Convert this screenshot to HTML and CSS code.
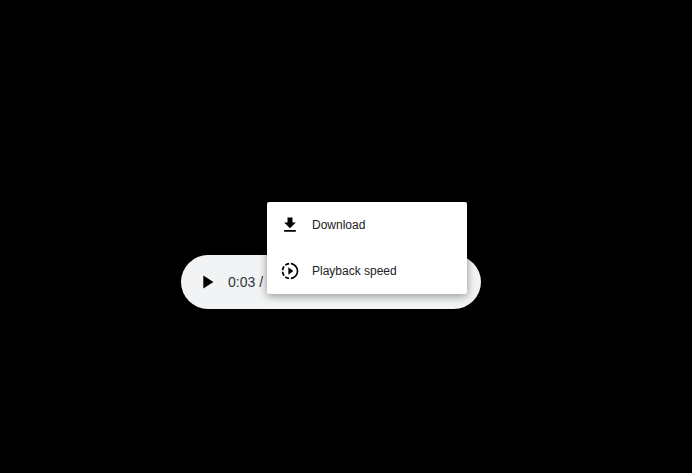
FILE: index.html
```html
<!DOCTYPE html>
<html lang="en">

<head>
    <meta charset="UTF-8">
    <meta name="viewport" content="width=device-width, initial-scale=1.0">
    <title>Audio player</title>
    <link rel="stylesheet" href="styles.css">
</head>

<body>
    <div class="player">
        <button class="play-button" aria-label="Play">
            <svg viewBox="0 0 24 24" width="22" height="22">
                <path d="M8 5v14l11-7z" />
            </svg>
        </button>
        <span class="time">0:03 / 0:27</span>

        <div class="menu">
            <div class="menu-item">
                <svg viewBox="0 0 24 24" width="20" height="20">
                    <path d="M19 9h-4V3H9v6H5l7 7 7-7zM5 18v2h14v-2H5z" />
                </svg>
                <span>Download</span>
            </div>
            <div class="menu-item">
                <svg viewBox="0 0 24 24" width="20" height="20">
                    <path d="M10 7.5v9l6-4.5zM11 4.07V2.05c-2.01.2-3.84 1-5.32 2.21L7.1 5.69c1.11-.86 2.44-1.44 3.9-1.62zM5.69 7.1L4.26 5.68C3.05 7.16 2.25 8.99 2.05 11h2.02c.18-1.46.76-2.79 1.62-3.9zM4.07 13H2.05c.2 2.01 1 3.84 2.21 5.32l1.43-1.43c-.86-1.1-1.44-2.43-1.62-3.89zm1.61 6.74C7.16 20.95 9 21.75 11 21.95v-2.02c-1.46-.18-2.79-.76-3.9-1.62l-1.42 1.43zM22 12c0 5.16-3.92 9.42-8.95 9.95v-2.02C16.97 19.41 20 16.05 20 12s-3.03-7.41-6.95-7.93V2.05C18.08 2.58 22 6.84 22 12z" />
                </svg>
                <span>Playback speed</span>
            </div>
        </div>
    </div>
</body>

</html>
```

FILE: styles.css
```css
* {
    margin: 0;
    padding: 0;
    box-sizing: border-box;
}

body {
    background: #000;
    min-height: 100vh;
    padding: 255px 0 0 181px;
    font-family: "Liberation Sans", Arial, sans-serif;
    overflow: hidden;
}

.player {
    position: relative;
    width: 300px;
    height: 54px;
    display: flex;
    align-items: center;
    padding-left: 15px;
    background: #f1f3f4;
    border-radius: 27px;
}

.play-button {
    display: flex;
    width: 22px;
    height: 22px;
    border: none;
    background: none;
}

.time {
    margin-left: 10px;
    font-size: 14px;
    color: #303336;
    white-space: nowrap;
}

.menu {
    position: absolute;
    left: 86px;
    top: -53px;
    width: 200px;
    background: #fff;
    border-radius: 2px;
    box-shadow: 0 2px 8px rgba(0, 0, 0, 0.4);
}

.menu-item {
    display: flex;
    align-items: center;
    gap: 12px;
    height: 46px;
    padding-left: 13px;
    font-size: 12px;
    color: #202124;
}
```
